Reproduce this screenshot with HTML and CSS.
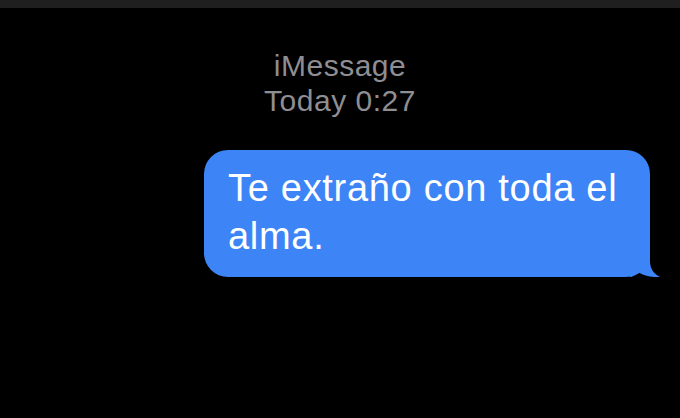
FILE: index.html
```html
<!DOCTYPE html>
<html>
<head>
<meta charset="utf-8">
<link rel="stylesheet" href="styles.css">
</head>
<body>
<div class="topbar"></div>
<div class="header">
  <div class="service">iMessage</div>
  <div class="time">Today <span class="clock">0:27</span></div>
</div>
<div class="row">
  <div class="bubble">
    <p class="text">Te extraño con toda el alma.</p>
    <svg class="tail" width="31" height="24" viewBox="0 0 31 24"><path d="M0 0 H20 V8 C20 16 24 21 30 24 C23 24.6 14 23 8 19 C5 22 2 24 0 24 Z" fill="#3d84f6"/></svg>
  </div>
</div>
</body>
</html>
```
FILE: styles.css
```css
html, body {
  margin: 0;
  padding: 0;
  background: #000;
  width: 680px;
  height: 418px;
  overflow: hidden;
  font-family: "Liberation Sans", Arial, sans-serif;
}
.topbar {
  height: 8px;
  background: #1f1f1f;
}
.header {
  margin-top: 40px;
  text-align: center;
  color: #8e8e93;
  font-size: 30px;
  line-height: 35px;
  letter-spacing: 0.5px;
}
.row {
  display: flex;
  justify-content: flex-end;
  padding-right: 30px;
  margin-top: 32px;
}
.bubble {
  position: relative;
  width: 446px;
  box-sizing: border-box;
  background: #3d84f6;
  border-radius: 24px;
  padding: 14px 18px 17px 24px;
}
.text {
  margin: 0;
  color: #fff;
  font-size: 38px;
  line-height: 48px;
  letter-spacing: 0.7px;
}
.tail {
  position: absolute;
  right: -11px;
  bottom: 0;
}
```
